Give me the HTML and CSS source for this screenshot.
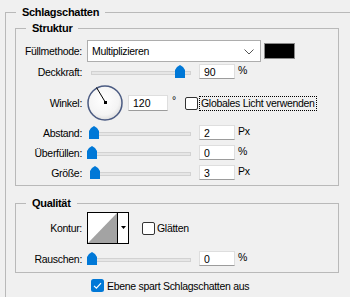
FILE: index.html
```html
<!DOCTYPE html>
<html lang="de">
<head>
    <meta charset="UTF-8">
    <meta name="viewport" content="width=device-width, initial-scale=1.0">
    <title>Ebenenstil - Schlagschatten</title>
    <link rel="stylesheet" href="styles.css">
</head>
<body>
    <fieldset class="group outer">
        <legend>Schlagschatten</legend>

        <fieldset class="group inner struktur">
            <legend>Struktur</legend>

            <div class="row row-blend">
                <label class="lbl">Füllmethode:</label>
                <div class="select">
                    <span>Multiplizieren</span>
                    <svg class="chevron" width="10" height="6" viewBox="0 0 10 6">
                        <polyline points="0.5,0.5 5,5 9.5,0.5" fill="none" stroke="#555" stroke-width="1"/>
                    </svg>
                </div>
                <div class="swatch"></div>
            </div>

            <div class="row row-slider row-opacity">
                <label class="lbl">Deckkraft:</label>
                <div class="slider"><div class="track"></div><div class="knob" style="left: 88px"></div></div>
                <input class="num" type="text" value="90">
                <span class="unit">%</span>
            </div>

            <div class="row row-angle">
                <label class="lbl">Winkel:</label>
                <svg class="dial" width="36" height="36" viewBox="0 0 36 36">
                    <defs>
                        <radialGradient id="dialFill" cx="45%" cy="40%" r="65%">
                            <stop offset="0" stop-color="#ffffff"/>
                            <stop offset="0.7" stop-color="#f4f4f4"/>
                            <stop offset="1" stop-color="#d8d8d8"/>
                        </radialGradient>
                    </defs>
                    <circle cx="18" cy="18" r="17" fill="url(#dialFill)" stroke="#4b5b82" stroke-width="1.5"/>
                    <line x1="18.5" y1="17.5" x2="9.5" y2="2.5" stroke="#000" stroke-width="1"/>
                    <rect x="17" y="16" width="3" height="3" fill="#000"/>
                </svg>
                <input class="num angle" type="text" value="120">
                <span class="deg">°</span>
                <span class="check"></span>
                <span class="focus-label">Globales Licht verwenden</span>
            </div>

            <div class="row row-slider row-distance">
                <label class="lbl">Abstand:</label>
                <div class="slider"><div class="track"></div><div class="knob" style="left: 2px"></div></div>
                <input class="num" type="text" value="2">
                <span class="unit">Px</span>
            </div>

            <div class="row row-slider">
                <label class="lbl">Überfüllen:</label>
                <div class="slider"><div class="track"></div><div class="knob" style="left: 0px"></div></div>
                <input class="num" type="text" value="0">
                <span class="unit">%</span>
            </div>

            <div class="row row-slider">
                <label class="lbl">Größe:</label>
                <div class="slider"><div class="track"></div><div class="knob" style="left: 3px"></div></div>
                <input class="num" type="text" value="3">
                <span class="unit">Px</span>
            </div>
        </fieldset>

        <fieldset class="group inner qualitaet">
            <legend>Qualität</legend>

            <div class="row row-contour">
                <label class="lbl">Kontur:</label>
                <div class="contour">
                    <svg class="curve" width="29" height="30" viewBox="0 0 29 30">
                        <rect width="29" height="30" fill="#fff"/>
                        <polygon points="0,30 29,0 29,30" fill="#a3a3a3"/>
                    </svg>
                    <div class="contour-arrow">
                        <svg width="5" height="3" viewBox="0 0 5 3"><polygon points="0,0 5,0 2.5,3" fill="#000"/></svg>
                    </div>
                </div>
                <span class="check check-smooth"></span>
                <span class="check-text">Glätten</span>
            </div>

            <div class="row row-slider row-noise">
                <label class="lbl">Rauschen:</label>
                <div class="slider"><div class="track"></div><div class="knob" style="left: 0px"></div></div>
                <input class="num" type="text" value="0">
                <span class="unit">%</span>
            </div>
        </fieldset>

        <div class="row row-knockout">
            <svg class="check-on" width="13" height="13" viewBox="0 0 13 13">
                <rect width="13" height="13" rx="2.5" fill="#0078d7"/>
                <polyline points="3,6.8 5.4,9.2 10,4.2" fill="none" stroke="#fff" stroke-width="1.2"/>
            </svg>
            <span class="check-text">Ebene spart Schlagschatten aus</span>
        </div>
    </fieldset>
</body>
</html>
```

FILE: styles.css
```css
:root {
    --bg-color: #f0f0f0;
    --group-line: #b9b9b9;
    --text-color: #000;
    --accent-color: #0078d7;
    --field-border: #dedede;
    --field-bottom: #9c9c9c;
}

* {
    box-sizing: border-box;
}

body {
    margin: 0;
    width: 350px;
    height: 297px;
    overflow: hidden;
    background: var(--bg-color);
    color: var(--text-color);
    font-family: 'Liberation Sans', Arial, sans-serif;
    font-size: 10.5px;
    letter-spacing: -0.3px;
}

.group {
    margin: 0;
    min-width: 0;
    border: 1px solid var(--group-line);
}

.group legend {
    font-weight: 700;
    font-size: 11px;
    line-height: 12px;
    padding: 0 6px;
}

/* the outer group runs on past the right and bottom edge of the window */
.outer {
    margin: 6px 0 0 5px;
    width: 345px;
    height: 291px;
    padding: 4px 0 0 9px;
    border-right: 0;
    border-bottom: 0;
}

.outer > legend {
    margin-left: 1px;
}

.inner {
    width: 324px;
    padding: 6px 0 5px 8px;
}

.inner > legend {
    margin-left: 2px;
}

.qualitaet {
    margin-top: 11px;
    padding-top: 3px;
    padding-bottom: 6px;
}

.row {
    display: flex;
    align-items: center;
}

.lbl {
    flex: none;
    width: 58px;
    margin-right: 5px;
    text-align: right;
    white-space: nowrap;
}

/* Füllmethode */
.row-blend {
    height: 22px;
}

.select {
    width: 174px;
    height: 22px;
    display: flex;
    align-items: center;
    justify-content: space-between;
    padding: 0 6px 0 4px;
    background: #fff;
    border: 1px solid #adadad;
}

.chevron {
    margin-top: 1px;
}

.swatch {
    width: 31px;
    height: 16px;
    margin-left: 3px;
    background: #000;
    border: 1px solid #8a8a8a;
}

/* slider rows */
.row-slider {
    height: 15px;
    margin-top: 5px;
}

.row-opacity {
    margin-top: 2px;
}

.row-distance {
    margin-top: 4px;
}

.slider {
    position: relative;
    flex: none;
    width: 104px;
    height: 15px;
}

.track {
    position: absolute;
    left: 4px;
    right: 0;
    top: 7px;
    height: 4px;
    background: #e6e6e6;
    border: 1px solid #d2d2d2;
}

.knob {
    position: absolute;
    top: 1px;
    width: 10px;
    height: 13px;
    background: var(--accent-color);
    clip-path: polygon(50% 0, 80% 15%, 100% 38%, 100% 100%, 0 100%, 0 38%, 20% 15%);
}

.num {
    flex: none;
    width: 36px;
    height: 15px;
    margin: 0 0 0 8px;
    padding: 0 0 0 4px;
    background: #fff;
    border: 1px solid var(--field-border);
    border-bottom-color: var(--field-bottom);
    font: inherit;
    color: var(--text-color);
    outline: none;
}

.unit {
    align-self: flex-start;
    margin-left: 3px;
    line-height: 12px;
}

/* Winkel */
.row-angle {
    height: 36px;
    margin-top: 6px;
}

.dial {
    flex: none;
}

.num.angle {
    width: 40px;
    height: 16px;
    margin-left: 5px;
}

.deg {
    align-self: flex-start;
    width: 6px;
    margin: 9px 0 0 4px;
    line-height: 12px;
}

.check {
    flex: none;
    width: 13px;
    height: 13px;
    margin-left: 7px;
    background: #fff;
    border: 1px solid #333;
    border-radius: 2px;
}

.focus-label {
    margin-left: 1px;
    padding: 0 1px;
    line-height: 13px;
    border: 1px dotted #000;
    white-space: nowrap;
}

/* Qualität */
.row-contour {
    height: 32px;
}

.contour {
    flex: none;
    display: flex;
    width: 42px;
    height: 32px;
    border: 1px solid #000;
    background: #fff;
}

.curve {
    display: block;
    border-right: 1px solid #000;
    width: 30px;
}

.contour-arrow {
    flex: 1;
    display: flex;
    align-items: center;
    justify-content: center;
    padding-bottom: 2px;
}

.check-smooth {
    margin-left: 13px;
}

.check-text {
    margin-left: 2px;
    white-space: nowrap;
}

.row-noise {
    margin-top: 7px;
}

.row-knockout {
    height: 13px;
    margin-top: 6px;
    padding-left: 76px;
}

.check-on {
    flex: none;
}

.row-knockout .check-text {
    margin-left: 3px;
}
```
